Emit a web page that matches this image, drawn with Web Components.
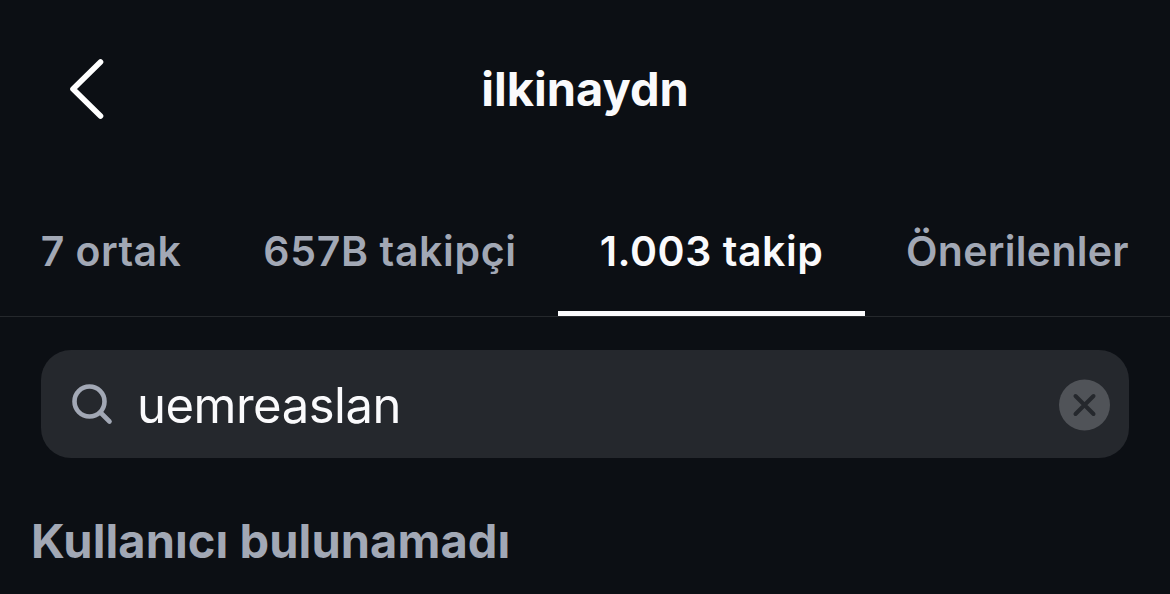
<!DOCTYPE html>
<html lang="tr">
<head>
<meta charset="utf-8">
<title>ilkinaydn</title>
<style>
    :root {
        --bg: #0c0f14;
        --field: #25282d;
        --white: #fafafc;
        --grey: #a2a8b5;
        --line: #25282c;
    }

    body {
        margin: 0;
        background-color: var(--bg);
        color: var(--white);
        font-family: Inter, "Liberation Sans", sans-serif;
    }
</style>
</head>
<body>
<follow-page>
    <page-header slot="header">ilkinaydn</page-header>
    <tab-bar slot="tabs">
        <tab-item style="letter-spacing: 0.4px">7 ortak</tab-item>
        <tab-item style="letter-spacing: 0.65px">657B takipçi</tab-item>
        <tab-item active style="letter-spacing: 0.55px">1.003 takip</tab-item>
        <tab-item style="letter-spacing: 0.3px">Önerilenler</tab-item>
    </tab-bar>
    <search-field>uemreaslan</search-field>
    <empty-message>Kullanıcı bulunamadı</empty-message>
</follow-page>

<script>
// define an element whose shadow root is filled from a template
function define(name, html) {
    const template = document.createElement("template");
    template.innerHTML = html;

    customElements.define(name, class extends HTMLElement {
        constructor() {
            super();
            const shadow = this.attachShadow({ mode: "open" });
            shadow.append(template.content.cloneNode(true));
        }
    });
}

// whole screen
define("follow-page", `
    <style>
        :host {
            display: flex;
            flex-direction: column;
            height: 594px;
            overflow: hidden;
        }
    </style>
    <slot name="header"></slot>
    <slot name="tabs"></slot>
    <slot></slot>
`);

// back arrow and centered username
define("page-header", `
    <style>
        :host {
            display: grid;
            grid-template-columns: 172px 1fr 172px;
            align-items: center;
            height: 178px;
        }

        svg {
            margin-left: 64px;
            display: block;
        }

        h1 {
            margin: 0;
            text-align: center;
            font-size: 47px;
            line-height: 60px;
            font-weight: 700;
            letter-spacing: 0;
        }
    </style>
    <svg width="46" height="70" viewBox="0 0 46 70" fill="none" stroke="#fff" stroke-width="5.6" stroke-linecap="round" stroke-linejoin="round">
        <path d="M36.5 8 L9 35 L36.5 62"/>
    </svg>
    <h1><slot></slot></h1>
`);

define("tab-bar", `
    <style>
        :host {
            display: grid;
            grid-template-columns: 222px 336px 307px 305px;
            height: 138px;
            border-bottom: 1px solid var(--line);
        }
    </style>
    <slot></slot>
`);

define("tab-item", `
    <style>
        :host {
            box-sizing: border-box;
            display: flex;
            justify-content: center;
            align-items: center;
            padding-top: 12px;
            border-bottom: 5px solid transparent;
            color: var(--grey);
            font-size: 41px;
            font-weight: 600;
            white-space: nowrap;
        }

        :host([active]) {
            color: var(--white);
            border-bottom-color: var(--white);
        }
    </style>
    <span><slot></slot></span>
`);

// search box with the typed name and a clear button
define("search-field", `
    <style>
        :host {
            box-sizing: border-box;
            display: flex;
            align-items: center;
            height: 108px;
            margin: 33px 41px 0;
            padding: 0 19px 0 29px;
            border-radius: 30px;
            background-color: var(--field);
        }

        span {
            flex: 1;
            margin-left: 23px;
            padding-top: 4px;
            font-size: 49px;
            line-height: 60px;
            letter-spacing: -0.5px;
        }

        svg {
            display: block;
            flex: none;
        }
    </style>
    <svg width="44" height="44" viewBox="0 0 44 44" fill="none" stroke="#a2a8b5" stroke-width="4.6" stroke-linecap="round">
        <circle cx="19.5" cy="19.5" r="15"/>
        <path d="M30.5 30.5 L39.5 39.5"/>
    </svg>
    <span><slot></slot></span>
    <svg width="51" height="53" viewBox="0 0 51 53" fill="none">
        <circle cx="25.5" cy="27" r="25.5" fill="#505358"/>
        <path d="M16.5 18 L34.5 36 M34.5 18 L16.5 36" stroke="#25282d" stroke-width="4" stroke-linecap="round"/>
    </svg>
`);

define("empty-message", `
    <style>
        :host {
            display: block;
            margin: 53px 0 0 31px;
            color: var(--grey);
            font-size: 47px;
            line-height: 60px;
            font-weight: 700;
            letter-spacing: 0.08px;
        }
    </style>
    <slot></slot>
`);
</script>
</body>
</html>
